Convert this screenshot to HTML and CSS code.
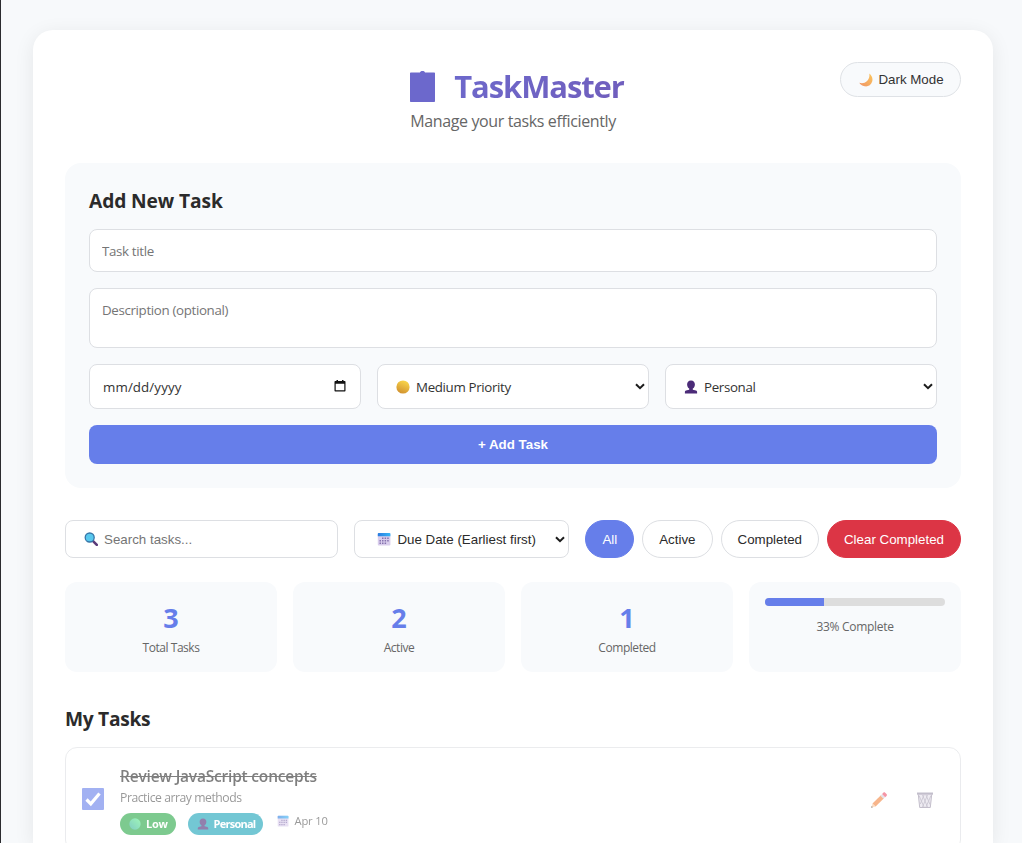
FILE: index.html
```html
<!DOCTYPE html>
<html lang="en">
<head>
    <meta charset="UTF-8">
    <meta name="viewport" content="width=device-width, initial-scale=1.0">
    <title>TaskMaster</title>
    <link rel="stylesheet" href="styles.css">
</head>
<body>
    <!-- Shared icons -->
    <svg class="sprite" width="0" height="0">
        <defs>
            <linearGradient id="gold" x1="0.7" y1="0" x2="0.3" y2="1">
                <stop offset="0" stop-color="#fbd84b"/>
                <stop offset="1" stop-color="#d0902f"/>
            </linearGradient>
            <linearGradient id="green" x1="1" y1="0" x2="0" y2="1">
                <stop offset="0" stop-color="#5ff08a"/>
                <stop offset="1" stop-color="#2fae9b"/>
            </linearGradient>
            <linearGradient id="moon" x1="1" y1="0" x2="0" y2="1">
                <stop offset="0" stop-color="#fbc65a"/>
                <stop offset="1" stop-color="#f09468"/>
            </linearGradient>
            <linearGradient id="sky" x1="0" y1="0" x2="1" y2="0">
                <stop offset="0" stop-color="#2b7be0"/>
                <stop offset="1" stop-color="#35b5f5"/>
            </linearGradient>
            <symbol id="icon-person" viewBox="0 0 14 14">
                <path d="M7 .5c2.600 0 3.900 1.700 3.900 4 0 1.900-.9 3.500-2.100 4.100v1.100l3.200.8c.7.200 1.100.8 1.100 1.500v1.500H.9V12c0-.7.400-1.300 1.100-1.500l3.200-.8V8.600C4 8 3.100 6.400 3.100 4.500c0-2.300 1.300-4 3.900-4z" fill="#4b2b78"/>
            </symbol>
            <symbol id="icon-calendar" viewBox="0 0 14 14">
                <rect x=".8" y="1" width="12.600" height="12.500" rx="1" fill="#d9cdec"/>
                <path d="M.8 4.200V1.800c0-.5.400-.9.900-.9h10.800c.5 0 .9.400.9.900v2.400z" fill="url(#sky)"/>
                <path d="M5 6.200h1.500M7.600 6.200h1.500M10.200 6.200h1.500M2.500 8.700H4M5 8.700h1.500M7.600 8.700h1.500M10.200 8.700h1.500M2.500 11.200H4M5 11.200h1.500M7.600 11.200h1.500" stroke="#8573ae" stroke-width="1.500"/>
            </symbol>
            <symbol id="icon-chevron" viewBox="0 0 10 7">
                <path d="M1 1.200l4 4 4-4" fill="none" stroke="#1c1c1c" stroke-width="2"/>
            </symbol>
        </defs>
    </svg>

    <div class="container">
        <header class="header">
            <h1 class="title">
                <svg class="title-icon" viewBox="0 0 25 31"><path d="M1 1.500h9c.3-1 1-1.500 2.500-1.500s2.200.5 2.500 1.500h9c.6 0 1 .4 1 1V30c0 .6-.4 1-1 1H1c-.6 0-1-.4-1-1V2.500c0-.6.400-1 1-1z" fill="#6c68cc"/></svg>
                <span>TaskMaster</span>
            </h1>
            <p class="subtitle">Manage your tasks efficiently</p>
            <button class="theme-toggle">
                <svg class="emoji" viewBox="0 0 14 14"><path d="M10.300 .6c2.400 1.800 3.800 4.800 2.900 7.900-1 3.700-4.400 5.400-7.500 4.800C3.200 12.900 1.200 11.500.3 9.800c3 .8 5.700.2 7.500-1.500C9.900 6.300 10.800 3.500 10.300.6z" fill="url(#moon)"/></svg>
                <span>Dark Mode</span>
            </button>
        </header>

        <section class="task-form">
            <h2>Add New Task</h2>
            <input class="field" type="text" placeholder="Task title">
            <textarea class="field description" placeholder="Description (optional)"></textarea>
            <div class="form-row">
                <div class="field select">
                    <span class="date-text">mm/dd/yyyy</span>
                    <svg class="date-icon" viewBox="0 0 12 12"><path d="M2.500 0h1.500v1h4V0h1.500v1h1.300c.4 0 .7.300.7.700v9.100c0 .4-.3.700-.7.700H1.200c-.4 0-.7-.3-.7-.7V1.700c0-.4.300-.7.700-.7h1.300zM1.700 3.800v6.500h8.600V3.800z" fill="#111"/></svg>
                </div>
                <div class="field select with-emoji">
                    <svg class="emoji" viewBox="0 0 14 14"><circle cx="7" cy="7" r="6.600" fill="url(#gold)"/></svg>
                    <span>Medium Priority</span>
                    <svg class="chevron"><use href="#icon-chevron"/></svg>
                </div>
                <div class="field select with-emoji">
                    <svg class="emoji"><use href="#icon-person"/></svg>
                    <span>Personal</span>
                    <svg class="chevron"><use href="#icon-chevron"/></svg>
                </div>
            </div>
            <button class="add-button">+ Add Task</button>
        </section>

        <div class="controls">
            <label class="search">
                <svg class="emoji" viewBox="0 0 14 14"><path d="M8.800 8.800l4 4" stroke="#5a3a78" stroke-width="2.600" stroke-linecap="round"/><circle cx="5.700" cy="5.500" r="4.500" fill="#58c8ee" stroke="#3676a8" stroke-width="1.300"/></svg>
                <input type="text" placeholder="Search tasks...">
            </label>
            <div class="sort">
                <svg class="emoji"><use href="#icon-calendar"/></svg>
                <span>Due Date (Earliest first)</span>
                <svg class="chevron"><use href="#icon-chevron"/></svg>
            </div>
            <div class="filters">
                <button class="filter active">All</button>
                <button class="filter">Active</button>
                <button class="filter">Completed</button>
                <button class="filter clear">Clear Completed</button>
            </div>
        </div>

        <div class="stats">
            <div class="stat">
                <div class="stat-number">3</div>
                <div class="stat-label">Total Tasks</div>
            </div>
            <div class="stat">
                <div class="stat-number">2</div>
                <div class="stat-label">Active</div>
            </div>
            <div class="stat">
                <div class="stat-number">1</div>
                <div class="stat-label">Completed</div>
            </div>
            <div class="stat">
                <div class="progress"><div class="progress-fill" style="width: 33%"></div></div>
                <div class="stat-label">33% Complete</div>
            </div>
        </div>

        <section class="tasks">
            <h2>My Tasks</h2>
            <div class="task completed">
                <div class="checkbox">
                    <svg viewBox="0 0 22 22"><path d="M4.500 11.500l4.300 4.300L17.500 5.500" fill="none" stroke="#fff" stroke-width="3.200"/></svg>
                </div>
                <div class="task-body">
                    <div class="task-title">Review JavaScript concepts</div>
                    <div class="task-description">Practice array methods</div>
                    <div class="task-meta">
                        <span class="badge low">
                            <svg viewBox="0 0 14 14"><circle cx="7" cy="7" r="6.600" fill="url(#green)"/></svg>
                            Low
                        </span>
                        <span class="badge personal">
                            <svg><use href="#icon-person"/></svg>
                            Personal
                        </span>
                        <span class="due">
                            <svg><use href="#icon-calendar"/></svg>
                            Apr 10
                        </span>
                    </div>
                </div>
                <div class="task-actions">
                    <svg viewBox="0 0 18 18"><path d="M1.200 16.800l1.300-4.300 3.100 3.100z" fill="#f9c9a0"/><path d="M2.500 12.500l8.400-8.300 3.100 3.100-8.400 8.300z" fill="#f2853f"/><path d="M10.400 4.700l1.700-1.700 3.100 3.100-1.700 1.700z" fill="#d5d0dd"/><path d="M12.100 3l1.200-1.200c.6-.6 1.300-.6 1.900 0l1.300 1.300c.6.600.6 1.300 0 1.900l-1.300 1.200z" fill="#f0506b"/><path d="M1.200 16.800l.5-1.700 1.200 1.200z" fill="#333"/></svg>
                    <svg viewBox="0 0 18 18"><path d="M2 3.200l1.500 13.300h11L16 3.200z" fill="#e3dfea"/><path d="M3 4.500l5 11.500M6.500 4l5 12M10 4l4 9.500M15 4.500L10 16M11.500 4l-5 12M8 4L4.300 13" stroke="#a8a1b4" stroke-width=".9" fill="none"/><path d="M2.300 3.500l1.400 13h10.600l1.400-13" stroke="#9c94a9" fill="none"/><path d="M1 1.500h16v2.200H1z" fill="#9b93aa"/></svg>
                </div>
            </div>
        </section>
    </div>
</body>
</html>
```

FILE: styles.css
```css
* {
    margin: 0;
    padding: 0;
    box-sizing: border-box;
}
body {
    font-family: "Open Sans", "Noto Sans", sans-serif;
    background: #f7f9fb;
    color: #2b2b2b;
    border-left: 1px solid #2b2b2f;
    padding: 30px 29px 0 32px;
    height: 843px;
    overflow: hidden;
}
.sprite {
    position: absolute;
}
svg {
    flex: none;
    display: block;
}
button, .sort, .search input {
    font-family: "Liberation Sans", Arial, sans-serif;
}
.container {
    background: #fff;
    border-radius: 20px 20px 0 0;
    box-shadow: 0 4px 20px rgba(0, 0, 0, 0.08);
    padding: 32px 32px 0;
    height: 813px;
    overflow: hidden;
}

/* Header */
.header {
    position: relative;
    height: 101px;
    text-align: center;
}
.title {
    display: flex;
    justify-content: center;
    align-items: center;
    height: 48px;
    font-size: 31px;
    font-weight: 700;
    letter-spacing: -1.1px;
    gap: 19px;
    padding-left: 8px;
    background: linear-gradient(135deg, #667eea, #764ba2);
    -webkit-background-clip: text;
    background-clip: text;
    color: transparent;
}
.title-icon {
    width: 25px;
    height: 31px;
}
.subtitle {
    color: #666;
    font-size: 16px;
    line-height: 22px;
    letter-spacing: -0.37px;
}
.theme-toggle {
    position: absolute;
    top: 0;
    right: 0;
    width: 121px;
    height: 35px;
    display: flex;
    align-items: center;
    justify-content: center;
    gap: 5px;
    padding-left: 2px;
    font-size: 13.33px;
    color: #333;
    background: #f8fafc;
    border: 1px solid #dfe2e6;
    border-radius: 18px;
}
.emoji {
    width: 14px;
    height: 14px;
}

/* Task form */
h2 {
    font-size: 19.2px;
    line-height: 26px;
    font-weight: 700;
    letter-spacing: -0.3px;
}
.task-form {
    display: flex;
    flex-direction: column;
    gap: 16px;
    height: 325px;
    padding: 25px 24px 24px;
    background: #f8fafc;
    border-radius: 16px;
}
.task-form h2 {
    letter-spacing: -0.1px;
    margin-bottom: -1px;
}
.field {
    width: 100%;
    height: 43px;
    padding: 0 12px;
    font-family: inherit;
    font-size: 13.33px;
    letter-spacing: -0.35px;
    color: #333;
    background: #fff;
    border: 1px solid #dddfe3;
    border-radius: 8px;
}
.field::placeholder, .search input::placeholder {
    color: #757575;
}
.description {
    display: block;
    height: 60px;
    padding-top: 12px;
    resize: none;
}
.form-row {
    display: grid;
    grid-template-columns: repeat(3, 1fr);
    gap: 16px;
}
.select {
    display: flex;
    align-items: center;
    height: 45px;
    padding: 0 3px 0 13px;
}
.date-text {
    letter-spacing: 0.1px;
}
.select .date-icon {
    width: 12px;
    height: 12px;
    margin-left: auto;
    margin-right: 11px;
    margin-bottom: 2px;
}
.with-emoji {
    gap: 6px;
    padding-left: 18px;
}
.chevron {
    width: 10px;
    height: 7px;
    margin-left: auto;
}
.add-button {
    height: 39px;
    flex: none;
    border: none;
    border-radius: 8px;
    background: #667eea;
    color: #fff;
    font-size: 13.33px;
    font-weight: 700;
}

/* Search, sort and filters */
.controls {
    display: flex;
    gap: 16px;
    height: 38px;
    margin-top: 32px;
}
.search, .sort {
    display: flex;
    align-items: center;
    gap: 6px;
    border: 1px solid #dddfe3;
    border-radius: 8px;
}
.search {
    flex: 1;
    padding: 0 18px;
}
.search input {
    width: 100%;
    border: none;
    outline: none;
    font-size: 13.33px;
}
.sort {
    width: 215px;
    padding: 0 3px 0 22px;
    font-size: 13.33px;
    white-space: nowrap;
}
.filters {
    display: flex;
    gap: 8px;
}
.filter {
    padding: 0 16px;
    font-size: 13.33px;
    color: #2b2b2b;
    background: #fff;
    border: 1px solid #dddfe3;
    border-radius: 20px;
}
.filter.active {
    background: #667eea;
    border-color: #667eea;
    color: #fff;
}
.filter.clear {
    background: #dc3545;
    border-color: #dc3545;
    color: #fff;
}

/* Stats */
.stats {
    display: grid;
    grid-template-columns: repeat(4, 1fr);
    gap: 16px;
    margin: 24px 0 34px;
}
.stat {
    height: 90px;
    padding: 16px;
    text-align: center;
    background: #f8fafc;
    border-radius: 12px;
}
.stat-number {
    font-size: 27px;
    line-height: 39px;
    font-weight: 700;
    color: #667eea;
}
.stat-label {
    font-size: 12px;
    line-height: 22px;
    letter-spacing: -0.45px;
    color: #666;
}
.stat .progress + .stat-label {
    letter-spacing: -0.3px;
}
.progress {
    height: 8px;
    margin-bottom: 10px;
    background: #ddd;
    border-radius: 4px;
    overflow: hidden;
}
.progress-fill {
    height: 100%;
    background: #667eea;
}

/* Task list */
.task {
    display: flex;
    align-items: center;
    gap: 16px;
    height: 105px;
    margin-top: 15px;
    padding: 0 26px 0 16px;
    border: 1px solid #dddfe3;
    border-radius: 12px;
}
.task.completed {
    opacity: 0.6;
}
.checkbox {
    width: 22px;
    height: 22px;
    margin-bottom: 2px;
    background: #667eea;
    border-radius: 1px;
}
.task-body {
    flex: 1;
}
.task-title {
    font-size: 15.5px;
    line-height: 22px;
    font-weight: 600;
    letter-spacing: -0.2px;
    text-decoration: line-through;
}
.task-description {
    font-size: 12.2px;
    line-height: 22px;
    letter-spacing: -0.45px;
    color: #555;
}
.task-meta {
    display: flex;
    gap: 12px;
    margin-top: 4px;
}
.badge, .due {
    display: flex;
    align-items: center;
    height: 22px;
    font-size: 11.2px;
    letter-spacing: -0.3px;
}
.badge {
    gap: 5px;
    padding: 0 8px 0 9px;
    color: #fff;
    font-weight: 700;
    font-size: 11px;
    border-radius: 11px;
}
.badge svg, .due svg {
    width: 12px;
    height: 12px;
}
.low {
    background: #28a745;
}
.personal {
    background: #17a2b8;
    letter-spacing: -0.75px;
}
.due {
    gap: 5px;
    height: 16px;
    margin-left: 2px;
    letter-spacing: -0.15px;
    color: #555;
}
.task-actions {
    display: flex;
    gap: 28px;
}
.task-actions svg {
    width: 18px;
    height: 18px;
}
```
